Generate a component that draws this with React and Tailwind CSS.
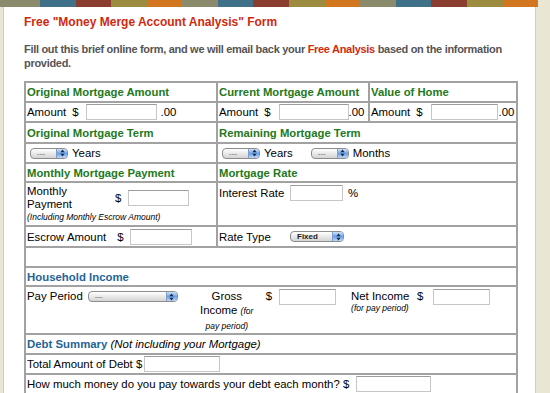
import React from 'react'

const stripe = ['bg-[#8b8a6d]', 'bg-[#3f7189]', 'bg-[#8b3e2f]', 'bg-[#9c8c40]', 'bg-[#d2771f]']

const td = 'border border-[#a2a2a2] px-[1px] align-middle'
const head = 'border border-[#a2a2a2] px-[1px] align-middle text-[11.3px] font-bold text-[#23791c]'
const blue = 'font-bold text-[#1f6597]'

function Field({ className = '' }) {
  return (
    <input
      type="text"
      className={`h-[16px] shrink-0 border border-[#c6c6c6] border-t-[#9c9c9c] bg-white outline-none ${className}`}
    />
  )
}

function Picker({ className = '', label = '---', bold = false }) {
  return (
    <span
      className={`inline-flex h-[11px] shrink-0 items-stretch overflow-hidden rounded-[4px] border border-[#8d8d8d] bg-gradient-to-b from-white to-[#d4d4d4] ${className}`}
    >
      <span
        className={`flex-1 pl-[6px] text-[8px] leading-[9px] ${bold ? 'font-bold text-[#222]' : 'text-[#666]'}`}
      >
        {label}
      </span>
      <span className="flex w-[11px] items-center justify-center border-l border-[#7f9ccc] bg-gradient-to-b from-[#cfe2f8] via-[#6aa0e6] to-[#bcd8f8]">
        <svg width="5" height="8" viewBox="0 0 5 8">
          <path d="M2.5 0.5 L4.6 3.2 H0.4 Z M2.5 7.5 L4.6 4.8 H0.4 Z" fill="#1b2b45" />
        </svg>
      </span>
    </span>
  )
}

export default function App() {
  return (
    <div className="h-[393px] w-[550px] overflow-hidden bg-[#e9e6d4] font-['Liberation_Sans',Arial,sans-serif]">
      <div className="flex h-[7px] w-[538px]">
        <div className={`w-[40px] ${stripe[0]}`} />
        {Array.from({ length: 14 }).map((_, i) => (
          <div key={i} className={`flex-1 ${stripe[(i + 1) % 5]}`} />
        ))}
      </div>

      <div className="ml-[3px] h-[386px] w-[533px] border-x border-[#d2cebb] bg-white pl-[20px] pt-[8px]">
        <h1 className="text-[12px] font-bold leading-[14px] text-[#cf2a0f]">
          Free "Money Merge Account Analysis" Form
        </h1>
        <p className="mt-[13px] w-[500px] text-[11px] font-bold leading-[14px] tracking-[-0.3px] text-[#555]">
          Fill out this brief online form, and we will email back your{' '}
          <span className="text-[#cf2a0f]">Free Analysis</span> based on the information provided.
        </p>

        <table className="mt-[11px] w-[494px] table-fixed border-separate border-spacing-0 border border-[#a2a2a2] text-[11.4px] leading-[14px] text-black">
          <colgroup>
            <col className="w-[192px]" />
            <col className="w-[152px]" />
            <col className="w-[148px]" />
          </colgroup>
          <tbody>
            <tr>
              <td className={`${head} h-[20px]`}>Original Mortgage Amount</td>
              <td className={head}>Current Mortgage Amount</td>
              <td className={head}>Value of Home</td>
            </tr>
            <tr>
              <td className={`${td} h-[20px]`}>
                <div className="flex items-center">
                  <span>Amount</span>
                  <span className="ml-[6px]">$</span>
                  <Field className="ml-[7px] w-[71px]" />
                  <span className="ml-[4px]">.00</span>
                </div>
              </td>
              <td className={td}>
                <div className="flex items-center">
                  <span>Amount</span>
                  <span className="ml-[6px]">$</span>
                  <Field className="ml-[8px] w-[70px]" />
                  <span>.00</span>
                </div>
              </td>
              <td className={td}>
                <div className="flex items-center">
                  <span>Amount</span>
                  <span className="ml-[6px]">$</span>
                  <Field className="ml-[8px] w-[67px]" />
                  <span className="ml-[1px]">.00</span>
                </div>
              </td>
            </tr>
            <tr>
              <td className={`${head} h-[21px]`}>Original Mortgage Term</td>
              <td className={head} colSpan={2}>
                Remaining Mortgage Term
              </td>
            </tr>
            <tr>
              <td className={`${td} h-[20px]`}>
                <div className="flex items-center">
                  <Picker className="ml-[3px] w-[38px]" />
                  <span className="ml-[4px]">Years</span>
                </div>
              </td>
              <td className={td} colSpan={2}>
                <div className="flex items-center">
                  <Picker className="ml-[3px] w-[38px]" />
                  <span className="ml-[4px]">Years</span>
                  <Picker className="ml-[18px] w-[38px]" />
                  <span className="ml-[4px]">Months</span>
                </div>
              </td>
            </tr>
            <tr>
              <td className={`${head} h-[19px]`}>Monthly Mortgage Payment</td>
              <td className={head} colSpan={2}>
                Mortgage Rate
              </td>
            </tr>
            <tr>
              <td className="h-[44px] border border-[#a2a2a2] px-[1px] pt-[2px] align-top">
                <div className="flex items-center">
                  <div className="w-[88px] leading-[13px]">
                    Monthly
                    <br />
                    Payment
                  </div>
                  <span>$</span>
                  <Field className="ml-[7px] w-[61px]" />
                </div>
                <div className="mt-[1px] text-[8.5px] italic leading-[11px]">
                  (Including Monthly Escrow Amount)
                </div>
              </td>
              <td className="border border-[#a2a2a2] px-[1px] pt-[2px] align-top" colSpan={2}>
                <div className="flex items-center">
                  <span className="w-[71px]">Interest Rate</span>
                  <Field className="w-[53px]" />
                  <span className="ml-[5px]">%</span>
                </div>
              </td>
            </tr>
            <tr>
              <td className={`${td} h-[21px]`}>
                <div className="flex items-center">
                  <span>Escrow Amount</span>
                  <span className="ml-[11px]">$</span>
                  <Field className="ml-[7px] w-[62px]" />
                </div>
              </td>
              <td className={td} colSpan={2}>
                <div className="flex items-center">
                  <span className="w-[71px]">Rate Type</span>
                  <Picker className="w-[54px]" label="Fixed" bold />
                </div>
              </td>
            </tr>
            <tr>
              <td className={`${td} h-[20px]`} colSpan={3} />
            </tr>
            <tr>
              <td className={`${td} h-[19px] ${blue}`} colSpan={3}>
                Household Income
              </td>
            </tr>
            <tr>
              <td className="h-[46px] border border-[#a2a2a2] px-[1px] pt-[2px] align-top" colSpan={3}>
                <div className="flex items-start">
                  <span>Pay Period</span>
                  <Picker className="ml-[5px] mt-[2px] w-[90px]" />
                  <div className="ml-[20px] w-[58px] text-center">
                    Gross Income{' '}
                    <span className="text-[8.5px] italic">(for pay period)</span>
                  </div>
                  <span className="ml-[10px]">$</span>
                  <Field className="ml-[7px] w-[57px]" />
                  <div className="ml-[15px] w-[60px]">
                    <div>Net Income</div>
                    <div className="text-[8.5px] italic leading-[10px]">(for pay period)</div>
                  </div>
                  <span className="ml-[6px]">$</span>
                  <Field className="ml-[10px] w-[57px]" />
                </div>
              </td>
            </tr>
            <tr>
              <td className={`${td} h-[20px]`} colSpan={3}>
                <span className={blue}>Debt Summary</span>{' '}
                <span className="italic">(Not including your Mortgage)</span>
              </td>
            </tr>
            <tr>
              <td className={`${td} h-[20px]`} colSpan={3}>
                <div className="flex items-center">
                  <span>Total Amount of Debt $</span>
                  <Field className="ml-[2px] w-[76px]" />
                </div>
              </td>
            </tr>
            <tr>
              <td className={`${td} h-[20px]`} colSpan={3}>
                <div className="flex items-center">
                  <span>How much money do you pay towards your debt each month? $</span>
                  <Field className="ml-[7px] w-[75px]" />
                </div>
              </td>
            </tr>
          </tbody>
        </table>
      </div>
    </div>
  )
}
